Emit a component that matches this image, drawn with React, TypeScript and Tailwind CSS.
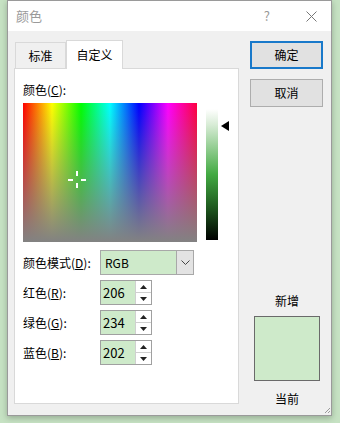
import React from 'react';

const font = { fontFamily: '"Microsoft YaHei UI", "Noto Sans CJK SC", "Noto Sans", sans-serif' };

function Spinner({ value }: { value: string }) {
  return (
    <div className="flex h-[25px] w-[52px] border border-[#a0a0a0] bg-white">
      <div className="flex flex-1 items-center bg-[#ceeaca] pl-[2px] text-[13px] text-black">{value}</div>
      <div className="flex w-[16px] flex-col border-l border-[#d0d0d0] bg-white">
        <div className="flex flex-1 items-center justify-center border-b border-[#d0d0d0]">
          <svg width="7" height="4" viewBox="0 0 7 4"><path d="M0 4 L3.5 0 L7 4Z" fill="#222" /></svg>
        </div>
        <div className="flex flex-1 items-center justify-center">
          <svg width="7" height="4" viewBox="0 0 7 4"><path d="M0 0 L3.5 4 L7 0Z" fill="#222" /></svg>
        </div>
      </div>
    </div>
  );
}

function Label({ text, k }: { text: string; k: string }) {
  return (
    <span className="w-[77px] text-[12px] text-black">
      {text}(<span className="underline">{k}</span>):
    </span>
  );
}

export default function App() {
  return (
    <div className="relative h-[423px] w-[340px] overflow-hidden bg-[#c6e2c3]" style={font}>
      <div className="ml-[7px] flex h-[416px] w-[325px] flex-col border border-[#9a9a9a] bg-[#f0f0f0] shadow-[0_2px_6px_rgba(0,0,0,0.25)]">
        {/* title bar */}
        <div className="flex h-[30px] items-center bg-white pl-[8px] pr-[14px]">
          <span className="text-[13px] text-[#9a9a9a]">颜色</span>
          <span className="ml-auto mr-[36px] text-[13px] text-[#999]">?</span>
          <svg width="11" height="11" viewBox="0 0 11 11">
            <path d="M0.5 0.5 L10.5 10.5 M10.5 0.5 L0.5 10.5" stroke="#777" strokeWidth="1" />
          </svg>
        </div>

        <div className="flex flex-1 pl-[6px] pt-[9px]">
          {/* left column */}
          <div className="flex w-[225px] flex-col">
            <div className="flex h-[28px] items-end pl-[1px]">
              <div className="flex h-[26px] w-[51px] items-center justify-center border border-b-0 border-[#d9d9d9] bg-[#f0f0f0] text-[12px] text-black">标准</div>
              <div className="relative z-10 -mb-px flex h-[29px] w-[57px] items-center justify-center border border-b-0 border-[#d9d9d9] bg-white text-[12px] text-black">自定义</div>
            </div>
            <div className="flex h-[336px] flex-col border border-[#d9d9d9] bg-white pl-[8px] pt-[12px]">
              <span className="h-[22px] text-[12px] text-black">
                颜色(<span className="underline">C</span>):
              </span>
              <div className="flex">
                <div className="relative h-[139px] w-[174px] bg-[linear-gradient(to_bottom,rgba(128,128,128,0),#828282),linear-gradient(to_right,#ff0000,#ffff00,#00ff00,#00ffff,#0000ff,#ff00ff,#ff0040)]">
                  <svg className="absolute left-[45px] top-[68px]" width="19" height="17" viewBox="0 0 19 17">
                    <rect x="0" y="8" width="5" height="2" fill="#fff" />
                    <rect x="13" y="8" width="5" height="2" fill="#fff" />
                    <rect x="8" y="0" width="2" height="5" fill="#fff" />
                    <rect x="8" y="12" width="2" height="5" fill="#fff" />
                  </svg>
                </div>
                <div className="ml-[9px] mt-[6px] h-[131px] w-[12px] bg-[linear-gradient(to_bottom,#ffffff,#d8ecd6_12%,#42aa42_50%,#1f5a1f_75%,#000000)]" />
                <svg className="ml-[3px] mt-[18px]" width="8" height="10" viewBox="0 0 8 10">
                  <path d="M0 5 L8 0 L8 10Z" fill="#000" />
                </svg>
              </div>

              <div className="mt-[8px] flex items-center">
                <Label text="颜色模式" k="D" />
                <div className="flex h-[25px] w-[94px] border border-[#a8a8a8] bg-[#ceeaca]">
                  <span className="flex flex-1 items-center pl-[4px] text-[12px] text-black">RGB</span>
                  <div className="flex w-[17px] items-center justify-center border-l border-[#a8a8a8] bg-[#e3e3e3]">
                    <svg width="9" height="5" viewBox="0 0 9 5"><path d="M0.5 0.5 L4.5 4.5 L8.5 0.5" stroke="#444" fill="none" /></svg>
                  </div>
                </div>
              </div>
              <div className="mt-[5px] flex items-center">
                <Label text="红色" k="R" />
                <Spinner value="206" />
              </div>
              <div className="mt-[5px] flex items-center">
                <Label text="绿色" k="G" />
                <Spinner value="234" />
              </div>
              <div className="mt-[5px] flex items-center">
                <Label text="蓝色" k="B" />
                <Spinner value="202" />
              </div>
            </div>
          </div>

          {/* right column */}
          <div className="ml-[11px] flex w-[74px] flex-col">
            <button className="mt-[1px] flex h-[28px] w-[73px] items-center justify-center border-2 border-[#1979ca] bg-[#e1e1e1] text-[12px] text-black">确定</button>
            <button className="mt-[10px] flex h-[28px] w-[73px] items-center justify-center border border-[#adadad] bg-[#e1e1e1] text-[12px] text-black">取消</button>
            <span className="mt-[185px] ml-[4px] w-[66px] text-center text-[12px] text-black">新增</span>
            <div className="ml-[4px] mt-[6px] h-[65px] w-[66px] border border-[#6a6a6a] bg-[#ceeaca]" />
            <span className="ml-[4px] mt-[9px] w-[66px] text-center text-[12px] text-black">当前</span>
          </div>
        </div>
      </div>

      <svg className="absolute left-[324px] top-[407px]" width="7" height="7" viewBox="0 0 7 7">
        <path d="M6 1 L1 6 M6 4 L4 6" stroke="#9a9a9a" />
      </svg>
    </div>
  );
}
